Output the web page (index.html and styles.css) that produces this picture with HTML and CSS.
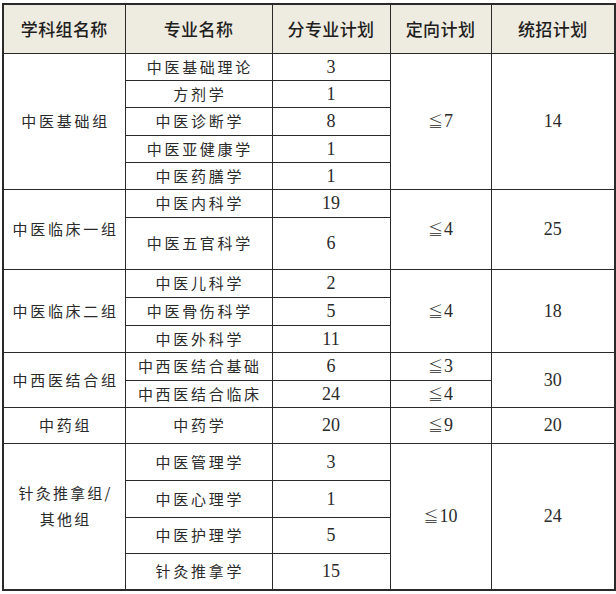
FILE: index.html
```html
<!DOCTYPE html>
<html lang="zh-CN">
<head>
<meta charset="utf-8">
<link rel="stylesheet" href="styles.css">
</head>
<body>
<table class="plan">
  <colgroup>
    <col class="c1"><col class="c2"><col class="c3"><col class="c4"><col class="c5">
  </colgroup>
  <thead>
    <tr class="h-head">
      <th>学科组名称</th><th>专业名称</th><th>分专业计划</th><th>定向计划</th><th>统招计划</th>
    </tr>
  </thead>
  <tbody>
    <tr class="h27"><td rowspan="5" class="grp">中医基础组</td><td class="cn">中医基础理论</td><td class="num">3</td><td rowspan="5" class="num"><span class="le">≦</span>7</td><td rowspan="5" class="num">14</td></tr>
    <tr class="h27"><td class="cn">方剂学</td><td class="num">1</td></tr>
    <tr class="h28"><td class="cn">中医诊断学</td><td class="num">8</td></tr>
    <tr class="h27"><td class="cn">中医亚健康学</td><td class="num">1</td></tr>
    <tr class="h27"><td class="cn">中医药膳学</td><td class="num">1</td></tr>

    <tr class="h28"><td rowspan="2" class="grp">中医临床一组</td><td class="cn">中医内科学</td><td class="num">19</td><td rowspan="2" class="num"><span class="le">≦</span>4</td><td rowspan="2" class="num">25</td></tr>
    <tr class="h52"><td class="cn">中医五官科学</td><td class="num">6</td></tr>

    <tr class="h28"><td rowspan="3" class="grp">中医临床二组</td><td class="cn">中医儿科学</td><td class="num">2</td><td rowspan="3" class="num"><span class="le">≦</span>4</td><td rowspan="3" class="num">18</td></tr>
    <tr class="h28"><td class="cn">中医骨伤科学</td><td class="num">5</td></tr>
    <tr class="h27"><td class="cn">中医外科学</td><td class="num">11</td></tr>

    <tr class="h28"><td rowspan="2" class="grp">中西医结合组</td><td class="cn">中西医结合基础</td><td class="num">6</td><td class="num"><span class="le">≦</span>3</td><td rowspan="2" class="num">30</td></tr>
    <tr class="h27"><td class="cn">中西医结合临床</td><td class="num">24</td><td class="num"><span class="le">≦</span>4</td></tr>

    <tr class="h36"><td class="grp">中药组</td><td class="cn">中药学</td><td class="num">20</td><td class="num"><span class="le">≦</span>9</td><td class="num">20</td></tr>

    <tr class="h37"><td rowspan="4" class="grp grp-wrap">针灸推拿组/<br>其他组</td><td class="cn">中医管理学</td><td class="num">3</td><td rowspan="4" class="num"><span class="le">≦</span>10</td><td rowspan="4" class="num">24</td></tr>
    <tr class="h37"><td class="cn">中医心理学</td><td class="num">1</td></tr>
    <tr class="h36"><td class="cn">中医护理学</td><td class="num">5</td></tr>
    <tr class="h37"><td class="cn">针灸推拿学</td><td class="num">15</td></tr>
  </tbody>
</table>
</body>
</html>
```

FILE: styles.css
```css
html, body {
  margin: 0;
  padding: 0;
  background: #ffffff;
}

body {
  padding: 3px 0 0 2px;
  font-family: "Noto Sans CJK SC", "Noto Sans", sans-serif;
  color: #2a2a2a;
}

.plan {
  border-collapse: collapse;
  table-layout: fixed;
  width: 612px;
  border: 2px solid #2a2a2a;
}

.c1 { width: 122px; }
.c2 { width: 147px; }
.c3 { width: 118px; }
.c4 { width: 101px; }
.c5 { width: 124px; }

.plan th,
.plan td {
  border: 1px solid #2a2a2a;
  padding: 0;
  text-align: center;
  vertical-align: middle;
  line-height: 20px;
}

.plan th {
  background: #eeebe0;
  font-weight: 500;
  font-size: 17px;
  letter-spacing: 0.4px;
  color: #1e1e1e;
}

.h-head { height: 49px; }
.h27 { height: 27px; }
.h28 { height: 28px; }
.h36 { height: 36px; }
.h37 { height: 37px; }
.h52 { height: 52px; }

.plan .cn,
.plan .grp {
  font-size: 15px;
  letter-spacing: 2.7px;
  padding-left: 2.7px;
  font-weight: 400;
}

.plan .grp-wrap {
  line-height: 26px;
  padding-bottom: 20px;
  letter-spacing: 2.2px;
}

.num {
  font-family: "Liberation Serif", "Noto Sans CJK SC", serif;
  font-size: 18px;
}

.le {
  font-family: "Noto Sans CJK SC", sans-serif;
  font-size: 15px;
  font-weight: 300;
  margin-right: 1px;
}
```
